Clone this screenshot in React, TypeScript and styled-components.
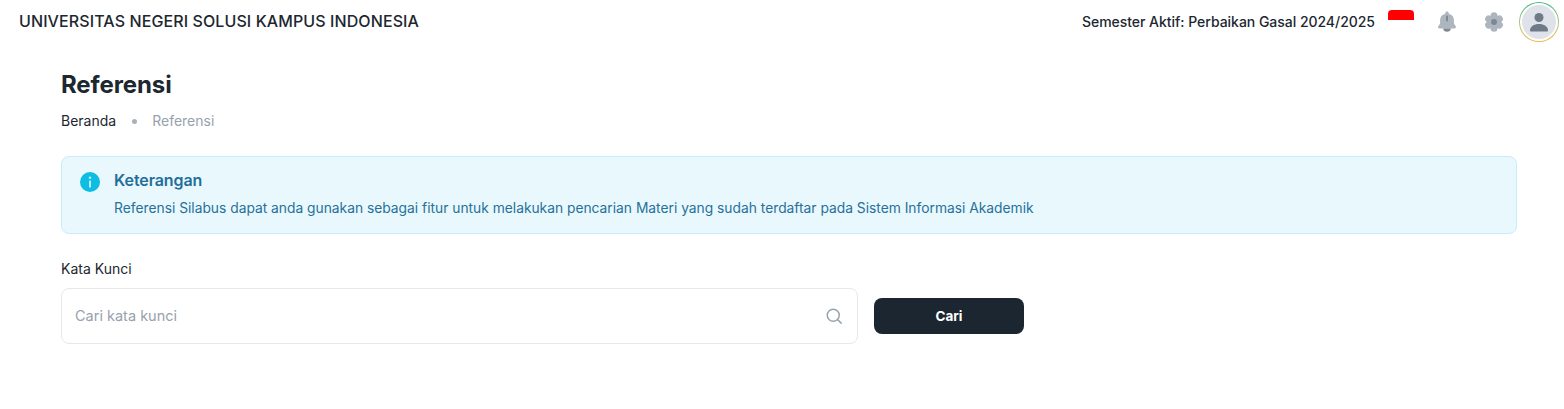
import React from "react";
import styled, { createGlobalStyle } from "styled-components";

const GlobalStyle = createGlobalStyle`
  html, body {
    margin: 0;
    padding: 0;
    background: #ffffff;
    font-family: "Inter", "Liberation Sans", sans-serif;
    color: #1c2730;
  }
`;

const Header = styled.header`
  height: 44px;
  display: flex;
  align-items: center;
  justify-content: space-between;
  padding: 0 5px 0 19px;
`;

const Brand = styled.div`
  font-size: 16px;
  letter-spacing: 0.1px;
  font-weight: 500;
  color: #1c2730;
  white-space: nowrap;
  margin-bottom: 2px;
`;

const HeaderRight = styled.div`
  display: flex;
  align-items: center;
`;

const Semester = styled.span`
  font-size: 14px;
  letter-spacing: -0.03px;
  font-weight: 500;
  color: #1c2730;
  margin: 0 13px 1px 0;
  white-space: nowrap;
`;

const Flag = styled.div`
  width: 26px;
  height: 20px;
  border-radius: 4px;
  overflow: hidden;
  margin: 0 21px 4px 0;
  background: #ffffff;
  &::before {
    content: "";
    display: block;
    height: 10px;
    background: #ff0000;
  }
`;

const IconSlot = styled.div<{ $gap: number }>`
  width: 24px;
  height: 24px;
  display: flex;
  align-items: center;
  justify-content: center;
  margin-right: ${(p) => p.$gap}px;
`;

const AvatarRing = styled.div`
  width: 40px;
  height: 40px;
  box-sizing: border-box;
  border-radius: 50%;
  padding: 1px;
  background: linear-gradient(180deg, #3fb87f 0%, #a3c585 50%, #f5b642 100%);
`;

const AvatarInner = styled.div`
  width: 100%;
  height: 100%;
  border-radius: 50%;
  border: 2px solid #ffffff;
  box-sizing: border-box;
  background: #dfe3e9;
  display: flex;
  align-items: center;
  justify-content: center;
`;

const Main = styled.main`
  padding: 0 47px 0 61px;
`;

const Title = styled.h1`
  margin: 25px 0 0;
  font-size: 24px;
  letter-spacing: -0.1px;
  line-height: 32px;
  font-weight: 700;
  color: #1c2730;
`;

const Breadcrumb = styled.nav`
  margin-top: 10px;
  display: flex;
  align-items: center;
  font-size: 14px;
  line-height: 20px;
`;

const Crumb = styled.span<{ $muted?: boolean }>`
  color: ${(p) => (p.$muted ? "#98a2ae" : "#1c2730")};
`;

const Dot = styled.span`
  width: 5px;
  height: 5px;
  border-radius: 50%;
  background: #a9b2bc;
  margin: 0 18px 0 16px;
  margin-right: 15px;
`;

const Alert = styled.div`
  margin-top: 25px;
  height: 78px;
  box-sizing: border-box;
  display: flex;
  gap: 14px;
  padding: 13px 18px;
  background: #e9f8fd;
  border: 1px solid #c8edf6;
  border-radius: 8px;
`;

const AlertIcon = styled.div`
  width: 20px;
  height: 20px;
  margin-top: 2px;
  flex-shrink: 0;
`;

const AlertBody = styled.div`
  display: flex;
  flex-direction: column;
  gap: 8px;
`;

const AlertTitle = styled.div`
  font-size: 16px;
  letter-spacing: -0.1px;
  line-height: 20px;
  font-weight: 600;
  color: #1f6f9a;
`;

const AlertText = styled.div`
  font-size: 13.8px;
  line-height: 20px;
  color: #27709a;
`;

const Label = styled.label`
  display: block;
  margin-top: 25px;
  font-size: 14px;
  line-height: 20px;
  color: #1c2730;
`;

const SearchRow = styled.div`
  margin-top: 9px;
  display: flex;
  align-items: center;
  gap: 16px;
`;

const InputWrap = styled.div`
  width: 797px;
  height: 56px;
  box-sizing: border-box;
  display: flex;
  align-items: center;
  justify-content: space-between;
  padding: 0 14px 0 13px;
  border: 1px solid #e5e8ec;
  border-radius: 8px;
`;

const Input = styled.input`
  flex: 1;
  border: none;
  outline: none;
  background: transparent;
  font-family: inherit;
  font-size: 14.5px;
  color: #1c2730;
  padding: 0;
  margin-top: -1px;
  &::placeholder {
    color: #98a2ae;
    opacity: 1;
  }
`;

const Button = styled.button`
  width: 150px;
  height: 36px;
  border: none;
  border-radius: 8px;
  background: #1c2630;
  color: #ffffff;
  font-family: inherit;
  font-size: 13.5px;
  font-weight: 700;
`;

const petals = [0, 60, 120, 180, 240, 300];

export default function App() {
  return (
    <>
      <GlobalStyle />
      <Header>
        <Brand>UNIVERSITAS NEGERI SOLUSI KAMPUS INDONESIA</Brand>
        <HeaderRight>
          <Semester>Semester Aktif: Perbaikan Gasal 2024/2025</Semester>
          <Flag />
          <IconSlot $gap={23}>
            <svg width="24" height="24" viewBox="0 0 24 24">
              <path
                d="M12 1.500c1 0 1.700.7 1.700 1.700v.6c3.500.8 5.200 3.400 5.200 6.200v3c0 1.200 1 2 1.700 2.900.9 1.200.2 2.600-1.300 2.600H4.700c-1.500 0-2.200-1.400-1.300-2.600.7-.9 1.700-1.700 1.700-2.900v-3c0-2.800 1.700-5.400 5.200-6.200v-.6c0-1 .7-1.700 1.700-1.700z"
                fill="#adb5bf"
              />
              <path d="M8 18.500h8c-.3 2-2 3.300-4 3.300s-3.700-1.300-4-3.300z" fill="#7d8894" />
              <rect x="11" y="5.500" width="2" height="6" rx="1" fill="#7d8894" />
            </svg>
          </IconSlot>
          <IconSlot $gap={13}>
            <svg width="24" height="24" viewBox="0 0 24 24">
              {petals.map((a) => (
                <circle key={a} cx="12" cy="5.800" r="3.500" fill="#adb5bf" transform={`rotate(${a} 12 12)`} />
              ))}
              <circle cx="12" cy="12" r="6.500" fill="#adb5bf" />
              <circle cx="12" cy="12" r="3" fill="#7d8894" />
            </svg>
          </IconSlot>
          <AvatarRing>
            <AvatarInner>
              <svg width="24" height="24" viewBox="0 0 24 24" fill="#6e7a87">
                <circle cx="12" cy="7.500" r="4.500" />
                <path d="M3 20.500c0-4 4-6.500 9-6.500s9 2.500 9 6.500c0 .6-.4 1-1 1H4c-.6 0-1-.4-1-1z" />
              </svg>
            </AvatarInner>
          </AvatarRing>
        </HeaderRight>
      </Header>
      <Main>
        <Title>Referensi</Title>
        <Breadcrumb>
          <Crumb>Beranda</Crumb>
          <Dot />
          <Crumb $muted>Referensi</Crumb>
        </Breadcrumb>
        <Alert>
          <AlertIcon>
            <svg width="20" height="20" viewBox="0 0 20 20">
              <circle cx="10" cy="10" r="10" fill="#0dbde3" />
              <rect x="9" y="8.500" width="2" height="7" rx=".6" fill="#bdeef8" />
              <circle cx="10" cy="5.800" r="1.300" fill="#bdeef8" />
            </svg>
          </AlertIcon>
          <AlertBody>
            <AlertTitle>Keterangan</AlertTitle>
            <AlertText>
              Referensi Silabus dapat anda gunakan sebagai fitur untuk melakukan pencarian Materi yang sudah terdaftar pada Sistem Informasi Akademik
            </AlertText>
          </AlertBody>
        </Alert>
        <Label>Kata Kunci</Label>
        <SearchRow>
          <InputWrap>
            <Input placeholder="Cari kata kunci" />
            <svg width="18" height="18" viewBox="0 0 24 24" fill="none" stroke="#98a2ae" strokeWidth="2" strokeLinecap="round">
              <circle cx="11" cy="11" r="8" />
              <path d="M17 17l4.500 4.500" />
            </svg>
          </InputWrap>
          <Button>Cari</Button>
        </SearchRow>
      </Main>
    </>
  );
}
